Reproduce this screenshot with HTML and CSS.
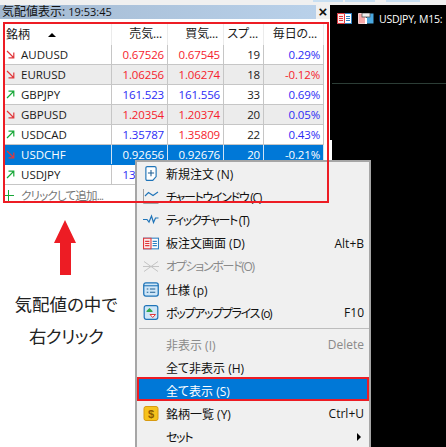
FILE: index.html
```html
<!DOCTYPE html>
<html lang="ja">
<head>
<meta charset="utf-8">
<title>気配値表示</title>
<link rel="stylesheet" href="styles.css">
</head>
<body>
<svg class="defs" width="0" height="0">
  <defs>
    <symbol id="down" viewBox="0 0 9 9"><path d="M1 1 L7.5 7.5 M7.8 2.5 V7.8 H2.5" fill="none" stroke="#e0383c" stroke-width="1.2"/></symbol>
    <symbol id="up" viewBox="0 0 9 9"><path d="M1 8 L7.5 1.5 M2.5 1.2 H7.8 V6.5" fill="none" stroke="#18a838" stroke-width="1.2"/></symbol>
    <symbol id="book" viewBox="0 0 15 11"><rect x=".5" y=".5" width="14" height="10" fill="#fff" stroke="#2f7fc1"/><path d="M.5.5H7.5V10.5H.5Z" fill="#fbeaea" stroke="#e0383c"/><path d="M2 3.5H6M2 5.5H6M2 7.5H6" stroke="#e0383c"/><path d="M9 3.5H13M9 5.5H13M9 7.5H13" stroke="#2f7fc1"/></symbol>
  </defs>
</svg>
<div class="topstrip">
  <span class="tab tab-a"></span><span class="tab tab-b"></span><span class="tab tab-c"></span>
</div>
<div class="main">
  <section class="left">
    <div class="titlebar">
      <div class="title">気配値表示: <span class="time">19:53:45</span></div>
      <div class="close">×</div>
    </div>
    <div class="table">
      <div class="row head">
        <div class="c name">銘柄<span class="sort"></span></div>
        <div class="c num">売気...</div>
        <div class="c num">買気...</div>
        <div class="c num">スプ...</div>
        <div class="c num pad">毎日の...</div>
      </div>
      <div class="row">
        <div class="c name"><svg class="trend"><use href="#down"/></svg>AUDUSD</div>
        <div class="c num red">0.67526</div><div class="c num red">0.67545</div><div class="c num">19</div><div class="c num blue">0.29%</div>
      </div>
      <div class="row alt">
        <div class="c name"><svg class="trend"><use href="#down"/></svg>EURUSD</div>
        <div class="c num red">1.06256</div><div class="c num red">1.06274</div><div class="c num">18</div><div class="c num red">-0.12%</div>
      </div>
      <div class="row">
        <div class="c name"><svg class="trend"><use href="#up"/></svg>GBPJPY</div>
        <div class="c num blue">161.523</div><div class="c num blue">161.556</div><div class="c num">33</div><div class="c num blue">0.69%</div>
      </div>
      <div class="row alt">
        <div class="c name"><svg class="trend"><use href="#down"/></svg>GBPUSD</div>
        <div class="c num red">1.20354</div><div class="c num red">1.20374</div><div class="c num">20</div><div class="c num blue">0.05%</div>
      </div>
      <div class="row">
        <div class="c name"><svg class="trend"><use href="#up"/></svg>USDCAD</div>
        <div class="c num blue">1.35787</div><div class="c num red">1.35809</div><div class="c num">22</div><div class="c num blue">0.43%</div>
      </div>
      <div class="row selected">
        <div class="c name"><svg class="trend"><use href="#down"/></svg>USDCHF</div>
        <div class="c num">0.92656</div><div class="c num">0.92676</div><div class="c num">20</div><div class="c num">-0.21%</div>
      </div>
      <div class="row">
        <div class="c name"><svg class="trend"><use href="#up"/></svg>USDJPY</div>
        <div class="c num blue">138.912</div><div class="c num blue">138.932</div><div class="c num">20</div><div class="c num blue">0.10%</div>
      </div>
      <div class="addrow">
        <svg class="plus" viewBox="0 0 11 11"><path d="M5.5 0V11M0 5.5H11" stroke="#18a838" stroke-width="1"/></svg>
        <span>クリックして追加...</span>
      </div>
    </div>
    <div class="note">
      <svg class="bigarrow" viewBox="0 0 22 55"><path d="M11 0L22 23H17V55H6V23H0Z" fill="#ed1c24"/></svg>
      <p class="caption">気配値の中で</p>
      <p class="caption second">右クリック</p>
    </div>
  </section>
  <section class="chart">
    <div class="charthead">
      <svg class="chart-ico1"><use href="#book"/></svg>
      <svg class="chart-ico2" viewBox="0 0 16 11"><path d="M.5.5H7.5V10.5H.5Z" fill="#f8a8a8" stroke="#f4d0d0"/><path d="M8.5.5H15.5V10.5H8.5Z" fill="#4aa8e0"/><rect x="4" y="0" width="8" height="4" fill="#eee" stroke="#555" stroke-width=".8"/><rect x="7" y="5" width="2" height="6" fill="#fff"/></svg>
      <span class="charttitle">USDJPY, M15:</span>
    </div>
    <div class="gridline"></div>
    <div class="candle"></div>
  </section>
</div>
<div class="frame"></div>
<nav class="menu">
  <div class="item">
    <svg class="ico" viewBox="0 0 13 17"><path d="M2.3.7H10.7Q12.3.7 12.3 2.3V12L8.5 16.3H2.3Q.7 16.3 .7 14.7V2.3Q.7 .7 2.3.7Z" fill="#fff" stroke="#1f74b8" stroke-width="1.3"/><path d="M6.5 4.5V11.5M3 8H10" stroke="#1f5f94" stroke-width="1.2"/></svg>
    <span class="label">新規注文 (N)</span>
  </div>
  <div class="item">
    <svg class="ico" viewBox="0 0 16 15"><path d="M.5 0V14.5H15.5" fill="none" stroke="#a0a0a0"/><path d="M2 7L5.5 3.5L10 6.5L15 3" fill="none" stroke="#1f74b8" stroke-width="1.1"/></svg>
    <span class="label kana">チャートウインドウ (C)</span>
  </div>
  <div class="item">
    <svg class="ico" viewBox="0 0 16 10"><path d="M0 5H4L6 7.5L8.5 1.5L10.5 8L12.5 3.5H15.5" fill="none" stroke="#1f74b8" stroke-width="1.2"/></svg>
    <span class="label kana">ティックチャート (T)</span>
  </div>
  <div class="item">
    <svg class="ico"><use href="#book"/></svg>
    <span class="label">板注文画面 (D)</span><span class="key">Alt+B</span>
  </div>
  <div class="item off">
    <svg class="ico" viewBox="0 0 16 12"><path d="M1 1L15 11M1 11L15 1M0 6H16" fill="none" stroke="#c4c4c4"/></svg>
    <span class="label kana">オプションボード(O)</span>
  </div>
  <div class="item">
    <svg class="ico" viewBox="0 0 15 14"><rect x=".7" y=".7" width="13.6" height="12.6" rx="2" fill="#cfe6f7" stroke="#1f74b8" stroke-width="1.2"/><path d="M.7 3.5H14.3" stroke="#1f74b8"/><path d="M3.5 6.5H5M6.5 6.5H11.5M3.5 9.5H5M6.5 9.5H11.5" stroke="#1f5f94"/></svg>
    <span class="label">仕様 (p)</span>
  </div>
  <div class="item">
    <svg class="ico" viewBox="0 0 15 15"><rect x=".7" y=".7" width="13.6" height="13.6" rx="2" fill="#cfe6f7" stroke="#1f74b8" stroke-width="1.2"/><path d="M3 6L6 3L9 6Z" fill="#2fa84f"/><path d="M3 6H9V7H3Z" fill="#2fa84f"/><path d="M6.5 9.5H12L9.2 12.5Z" fill="#fff" stroke="#e0383c"/></svg>
    <span class="label kana">ポップアッププライス (o)</span><span class="key">F10</span>
  </div>
  <div class="sep"></div>
  <div class="item off">
    <span class="ico"></span>
    <span class="label">非表示 (I)</span><span class="key">Delete</span>
  </div>
  <div class="item">
    <span class="ico"></span>
    <span class="label">全て非表示 (H)</span>
  </div>
  <div class="item hot">
    <span class="ico"></span>
    <span class="label">全て表示 (S)</span>
  </div>
  <div class="item">
    <svg class="ico" viewBox="0 0 15 15"><rect x=".5" y=".5" width="14" height="14" rx="2" fill="#f6c21c" stroke="#d89a10"/><text x="7.5" y="11.5" text-anchor="middle" class="dollar">$</text></svg>
    <span class="label">銘柄一覧 (Y)</span><span class="key">Ctrl+U</span>
  </div>
  <div class="item">
    <span class="ico"></span>
    <span class="label kana">セット</span><span class="submenu"></span>
  </div>
</nav>
</body>
</html>
```
FILE: styles.css
```css
html, body {
  margin: 0;
  padding: 0;
  height: 447px;
  overflow: hidden;
  background: #fff;
}
body {
  position: relative;
  font-family: "Open Sans", "Noto Sans CJK JP", sans-serif;
  font-size: 11.5px;
  color: #1a1a1a;
}
.defs { display: block; height: 0; }
.topstrip {
  height: 5px;
  display: flex;
  background: #f0f0f0;
  box-sizing: border-box;
}
.tab { height: 2px; background: #c8dff2; }
.tab-a { width: 30px; margin-left: 313px; }
.tab-b { width: 30px; margin-left: 2px; }
.tab-c { width: 34px; margin-left: 11px; }
.main {
  display: flex;
  height: 442px;
}
.left { width: 330px; flex: none; background: #fff; }
.titlebar {
  display: flex;
  height: 14px;
  background: #f0f0f0;
  align-items: center;
}
.title {
  width: 316px;
  height: 14px;
  line-height: 14px;
  padding-left: 2px;
  box-sizing: border-box;
  font-size: 12px;
  background: linear-gradient(90deg, #a3b9d1, #b9d1ea);
  color: #111;
  white-space: nowrap;
}
.time { font-size: 11px; }
.close {
  flex: 1;
  text-align: center;
  font: bold 15px/14px "Liberation Sans", sans-serif;
  color: #111;
}
.table { margin-top: 5px; padding-left: 3px; }
.row {
  display: grid;
  grid-template-columns: 109px 56px 56px 40px 60px;
  height: 20px;
  width: 321px;
  box-sizing: border-box;
  border-bottom: 1px solid #c6c6c6;
  line-height: 19px;
}
.row.head {
  height: 21px;
  border-bottom: 0;
  font-size: 12px;
  line-height: 20px;
  font-feature-settings: "palt";
}
.row.alt { background: #ececec; }
.row.selected { background: #0078d7; color: #fff; border-bottom-color: #0078d7; }
.c {
  border-right: 1px solid #c6c6c6;
  white-space: nowrap;
  overflow: hidden;
}
.head .c { border-right-color: #ebebeb; }
.selected .c { border-right-color: #cfe3f5; }
.name {
  display: flex;
  align-items: center;
  padding-left: 3px;
}
.num { text-align: right; padding-right: 3px; letter-spacing: -.15px; }
.head .num { padding-right: 5px; }
.head .pad { padding-right: 6px; }
.red { color: #f5222d; }
.blue { color: #2b2bf5; }
.trend { width: 9px; height: 9px; margin-right: 6px; flex: none; }
.sort {
  width: 0;
  height: 0;
  margin-left: 18px;
  border-left: 4px solid transparent;
  border-right: 4px solid transparent;
  border-bottom: 4px solid #000;
}
.addrow {
  display: flex;
  align-items: center;
  height: 20px;
  color: #777;
  font-size: 11.5px;
  letter-spacing: -.8px;
  font-feature-settings: "palt";
}
.plus { width: 11px; height: 11px; margin-right: 7px; flex: none; }
.note { padding-top: 15px; }
.bigarrow { display: block; width: 22px; height: 55px; margin-left: 54px; }
.caption {
  margin: 17px 0 0 0;
  width: 132px;
  text-align: center;
  font-size: 17.5px;
  line-height: 24px;
  color: #222;
  font-feature-settings: "palt";
}
.caption.second { margin-top: 8px; letter-spacing: -.6px; }
.chart {
  flex: 1;
  background: #000;
  position: relative;
  color: #fff;
}
.charthead {
  display: flex;
  align-items: center;
  height: 11px;
  padding: 8px 0 0 7px;
  font-size: 10.5px;
}
.charttitle { white-space: nowrap; letter-spacing: -.2px; }
.chart-ico1 { width: 15px; height: 11px; margin-right: 6px; flex: none; }
.chart-ico2 { width: 16px; height: 11px; margin-right: 5px; flex: none; }
.gridline {
  margin: 59px 0 0 2px;
  height: 1px;
  background: #2c3d36;
}
.candle {
  position: absolute;
  left: 0;
  top: 135px;
  width: 2px;
  height: 20px;
  background: #fff;
}
.frame {
  position: absolute;
  left: 3px;
  top: 22px;
  width: 326px;
  height: 181px;
  box-sizing: border-box;
  border: 2px solid #ed1c24;
  z-index: 3;
  pointer-events: none;
}
.menu {
  position: absolute;
  left: 135px;
  top: 160px;
  width: 236px;
  height: 287px;
  box-sizing: border-box;
  background: #f0f0f0;
  border: 2px solid #a6a6a6;
  border-bottom: 0;
  overflow: hidden;
  z-index: 2;
  font-size: 12px;
  color: #111;
  font-feature-settings: "palt";
}
.item {
  display: flex;
  align-items: center;
  height: 23.2px;
  padding-left: 6px;
  padding-right: 5px;
}
.ico { display: block; width: 16px; height: 15px; margin-right: 7px; flex: none; }
.label { flex: 1; white-space: nowrap; }
.kana { letter-spacing: -1.3px; }
.key { white-space: nowrap; }
.off { color: #8a8a8a; }
.hot {
  background: #0078d7;
  color: #fff;
  height: 24.2px;
  margin-top: -3px;
  margin-bottom: 1.4px;
  padding-top: 4px;
  box-sizing: border-box;
  outline: 2px solid #ed1c24;
  outline-offset: -2px;
  position: relative;
}
.sep {
  height: 1px;
  background: #bdbdbd;
  margin: 3.6px 0 4.4px 2px;
}
.submenu {
  width: 0;
  height: 0;
  margin-right: 3px;
  border-top: 4px solid transparent;
  border-bottom: 4px solid transparent;
  border-left: 4px solid #000;
}
.dollar {
  font: bold 11px "Liberation Sans", sans-serif;
  fill: #8a5a00;
}
```
